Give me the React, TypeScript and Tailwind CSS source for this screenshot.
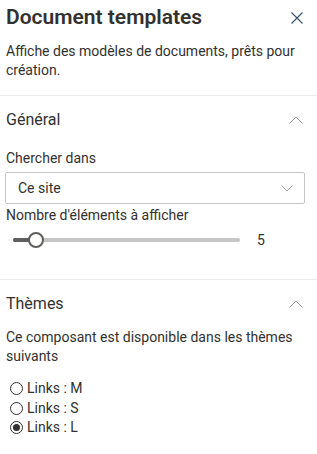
import React from 'react';

const font = { fontFamily: 'Roboto, "Noto Sans", sans-serif' };

function ChevronUp() {
  return (
    <svg width="14" height="8" viewBox="0 0 14 8" fill="none">
      <path d="M0.5 7.5 L7 1 L13.5 7.5" stroke="#a19f9d" strokeWidth="1" />
    </svg>
  );
}

function Radio({ label, checked }: { label: string; checked?: boolean }) {
  return (
    <label className="flex items-center h-[19.5px] text-[14px] text-[#323130]">
      <span className="w-[13px] h-[13px] rounded-full border border-[#323130] flex items-center justify-center mr-[4px] ml-[4px]">
        {checked && <span className="w-[7px] h-[7px] rounded-full bg-[#323130]" />}
      </span>
      {label}
    </label>
  );
}

export default function App() {
  return (
    <div className="w-[317px] h-[454px] bg-white text-[#323130]" style={font}>
      {/* Header */}
      <div className="flex items-start justify-between pl-[6px] pr-[14px] pt-[3px]">
        <h1 className="text-[21px] leading-[28px] font-semibold">Document templates</h1>
        <svg width="12" height="12" viewBox="0 0 12 12" className="mt-[9px]">
          <path d="M0.5 0.5 L11.5 11.5 M11.5 0.5 L0.5 11.5" stroke="#3a5573" strokeWidth="1.2" />
        </svg>
      </div>
      <p className="pl-[6px] pr-[20px] mt-[11px] text-[14px] leading-[19px]">
        Affiche des modèles de documents, prêts pour création.
      </p>

      {/* Général */}
      <div className="mt-[15px] border-t border-[#edebe9]">
        <div className="flex items-center justify-between h-[48px] pl-[6px] pr-[14px]">
          <span className="text-[16px]">Général</span>
          <ChevronUp />
        </div>
        <div className="pl-[5px] pr-[12px]">
          <div className="text-[14px] leading-[20px] mt-[4px] pl-[1px]">Chercher dans</div>
          <div className="mt-[4px] h-[32px] border border-[#c8c6c4] rounded-[2px] flex items-center justify-between pl-[12px] pr-[11px] text-[14px]">
            <span>Ce site</span>
            <svg width="12" height="7" viewBox="0 0 12 7" fill="none">
              <path d="M0.5 0.5 L6 6 L11.5 0.5" stroke="#a19f9d" strokeWidth="1" />
            </svg>
          </div>
          <div className="text-[14px] leading-[20px] mt-[1px] pl-[1px]">Nombre d'éléments à afficher</div>
          <div className="flex items-center h-[30px] pl-[8px]">
            <div className="relative w-[227px] h-[4px] rounded-full bg-[#c8c6c4]">
              <div className="absolute left-0 top-0 h-[4px] w-[23px] rounded-full bg-[#605e5c]" />
              <div className="absolute left-[15px] top-[-6px] w-[16px] h-[16px] rounded-full border-2 border-[#605e5c] bg-white" />
            </div>
            <span className="ml-[17px] text-[14px]">5</span>
          </div>
        </div>
      </div>

      {/* Thèmes */}
      <div className="mt-[24px] border-t border-[#edebe9]">
        <div className="flex items-center justify-between h-[48px] pl-[6px] pr-[14px]">
          <span className="text-[16px]">Thèmes</span>
          <ChevronUp />
        </div>
        <p className="pl-[6px] pr-[20px] text-[14px] leading-[19px]">
          Ce composant est disponible dans les thèmes suivants
        </p>
        <div className="mt-[13px] pl-[6px] flex flex-col">
          <Radio label="Links : M" />
          <Radio label="Links : S" />
          <Radio label="Links : L" checked />
        </div>
      </div>
    </div>
  );
}
